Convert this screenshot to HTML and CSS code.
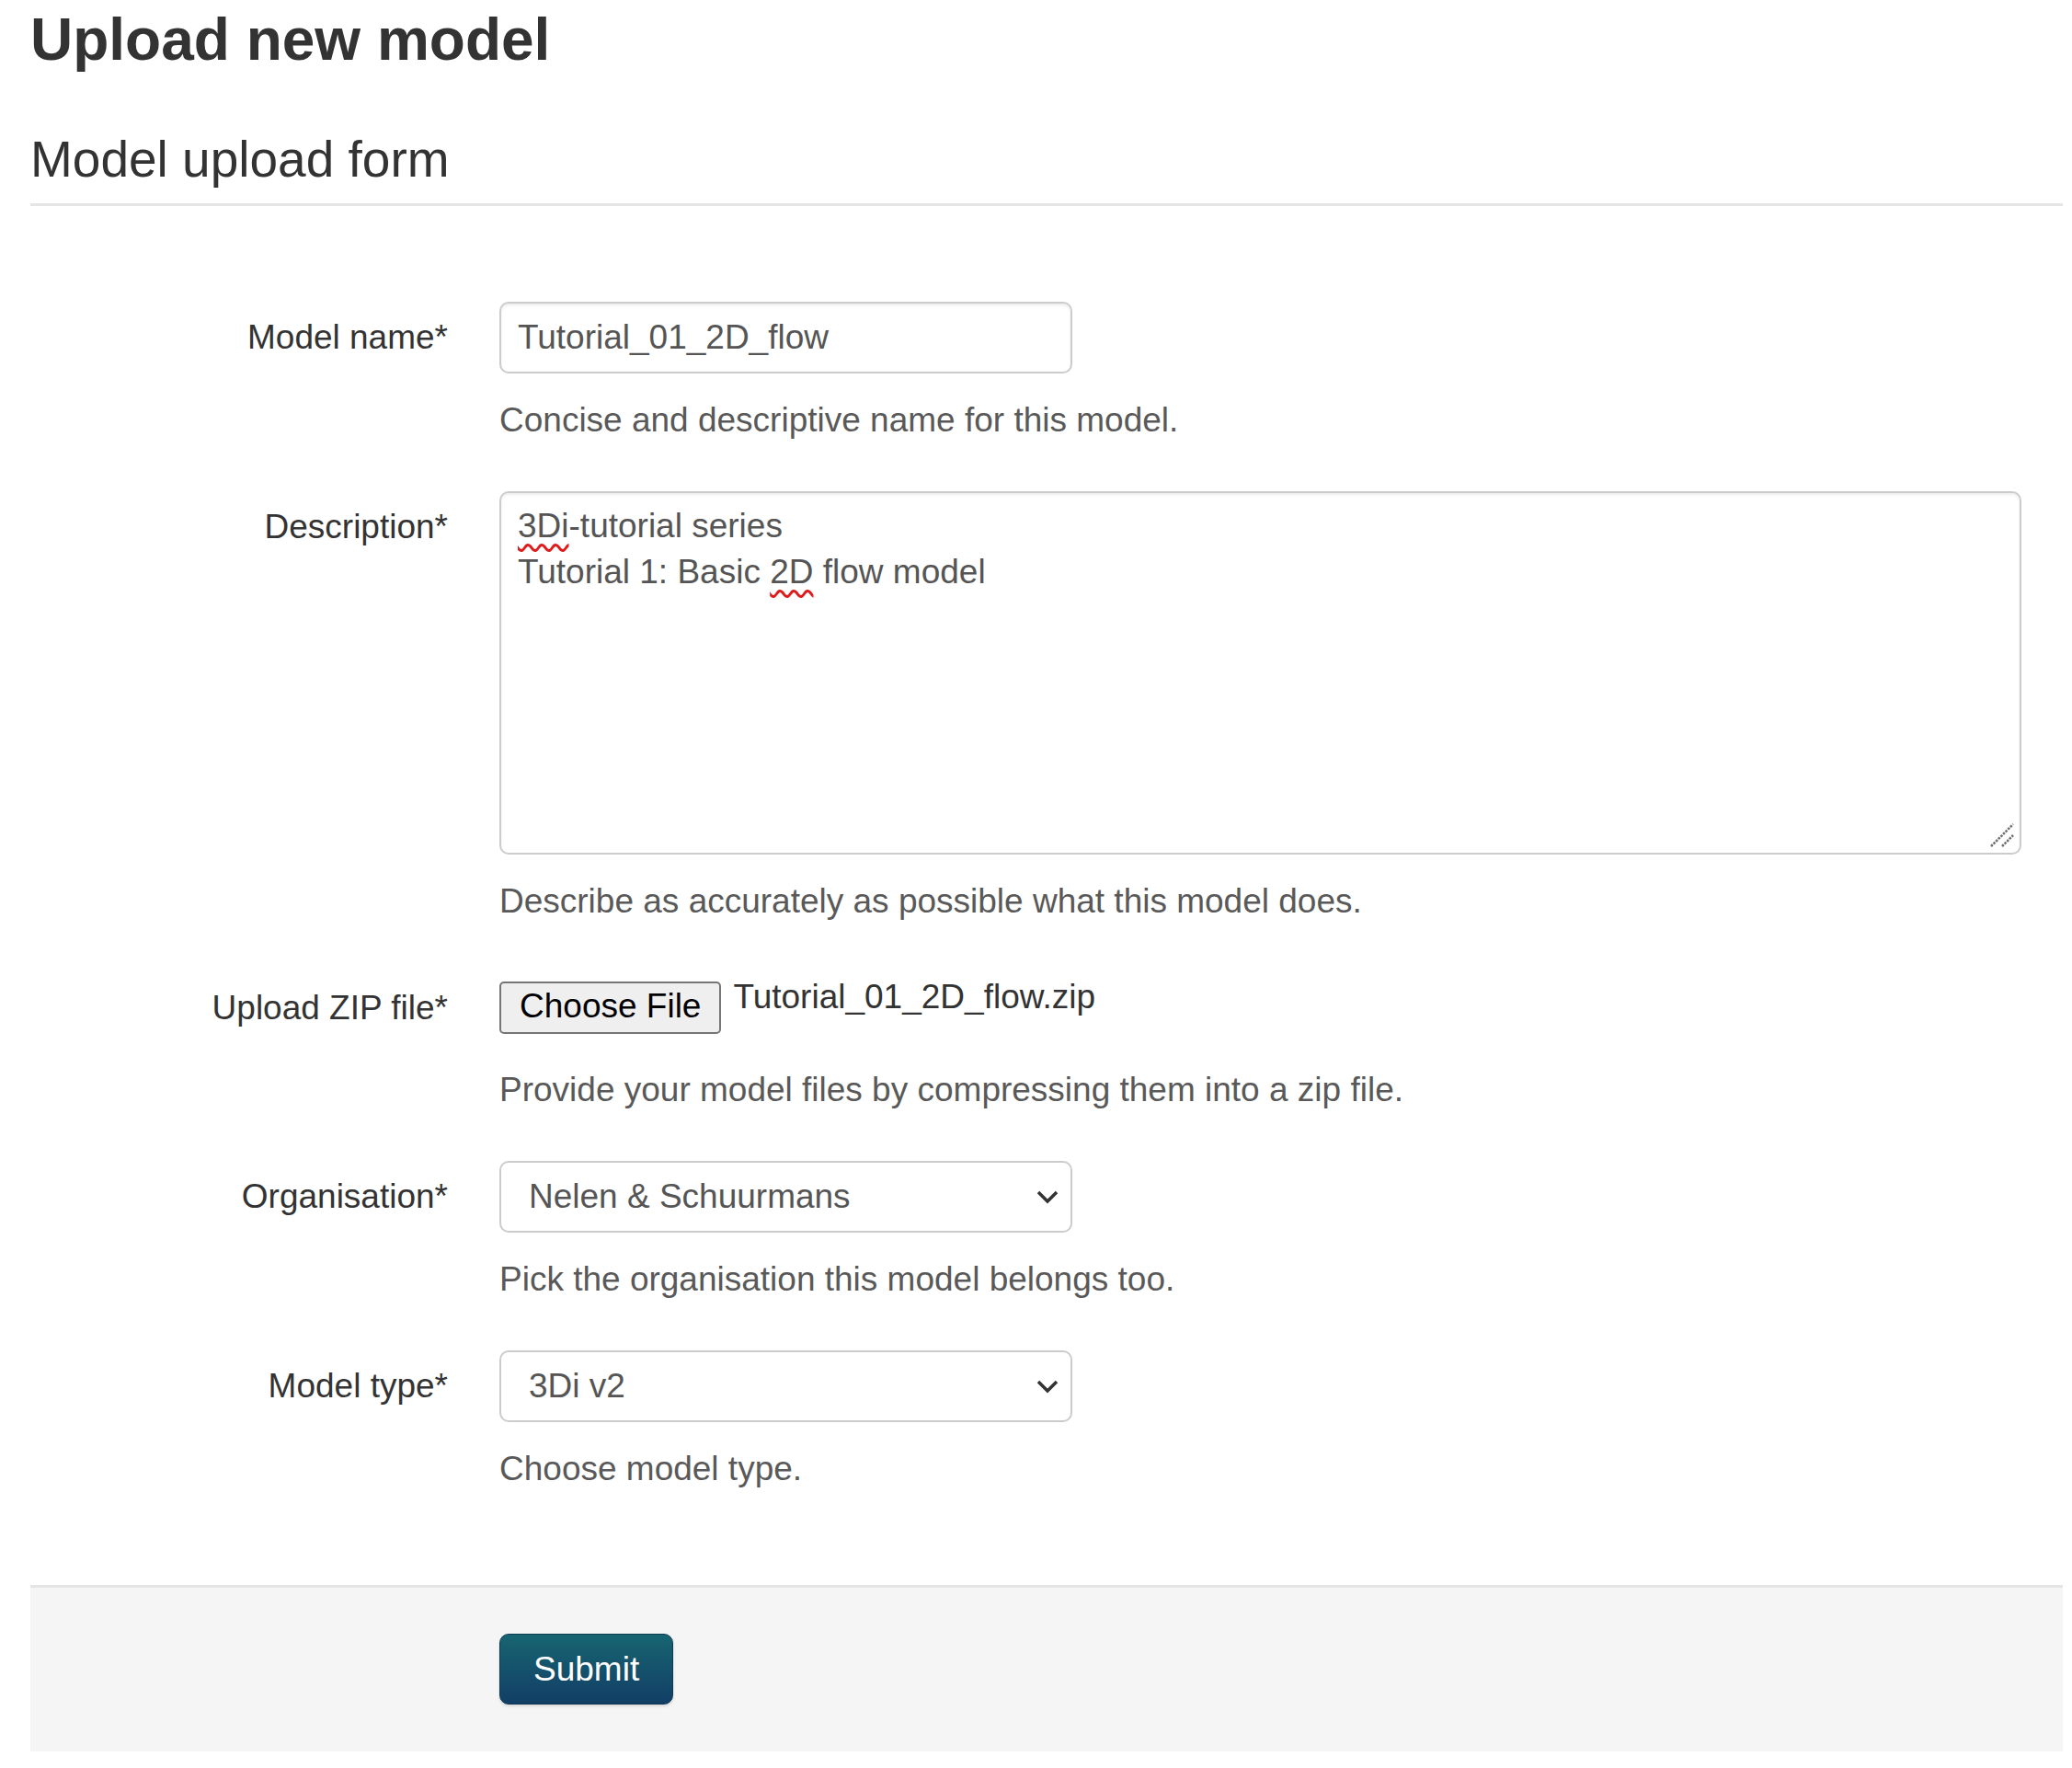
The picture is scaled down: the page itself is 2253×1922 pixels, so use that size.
FILE: index.html
```html
<!DOCTYPE html>
<html lang="en">
<head>
<meta charset="utf-8">
<title>Upload new model</title>
<link rel="stylesheet" href="styles.css">
</head>
<body>
<div class="page">
  <h1 class="title">Upload new model</h1>
  <form class="form">
    <div class="legend">Model upload form</div>

    <div class="group">
      <label class="label" for="name">Model name*</label>
      <div class="controls">
        <input class="input" id="name" type="text" value="Tutorial_01_2D_flow">
        <p class="help">Concise and descriptive name for this model.</p>
      </div>
    </div>

    <div class="group">
      <label class="label">Description*</label>
      <div class="controls">
        <div class="textarea"><span class="misspelled">3Di</span>-tutorial series<br>Tutorial 1: Basic <span class="misspelled">2D</span> flow model<svg class="grip" width="30" height="30" viewBox="0 0 30 30"><path d="M3 27 L27 3" stroke="#6e6e6e" stroke-width="2.5" stroke-dasharray="2.5 1.2"/><path d="M15 27 L27 15" stroke="#6e6e6e" stroke-width="2.5" stroke-dasharray="2.5 1.2"/></svg></div>
        <p class="help">Describe as accurately as possible what this model does.</p>
      </div>
    </div>

    <div class="group">
      <label class="label">Upload ZIP file*</label>
      <div class="controls">
        <div class="file">
          <button type="button" class="file-btn">Choose File</button>
          <span class="file-name">Tutorial_01_2D_flow.zip</span>
        </div>
        <p class="help">Provide your model files by compressing them into a zip file.</p>
      </div>
    </div>

    <div class="group">
      <label class="label">Organisation*</label>
      <div class="controls">
        <div class="select"><span>Nelen &amp; Schuurmans</span><svg class="chev" width="24" height="16" viewBox="0 0 24 16"><path d="M2 3 L12 13 L22 3" fill="none" stroke="#333" stroke-width="3.5"/></svg></div>
        <p class="help">Pick the organisation this model belongs too.</p>
      </div>
    </div>

    <div class="group last">
      <label class="label">Model type*</label>
      <div class="controls">
        <div class="select"><span>3Di v2</span><svg class="chev" width="24" height="16" viewBox="0 0 24 16"><path d="M2 3 L12 13 L22 3" fill="none" stroke="#333" stroke-width="3.5"/></svg></div>
        <p class="help">Choose model type.</p>
      </div>
    </div>

    <div class="actions">
      <button type="submit" class="submit">Submit</button>
    </div>
  </form>
</div>
</body>
</html>
```
FILE: styles.css
```css
html, body {
  margin: 0;
  padding: 0;
  background: #ffffff;
}

body {
  font-family: "Liberation Sans", Arial, sans-serif;
  font-size: 37px;
  color: #333333;
}

.page {
  padding: 0 10px 0 33px;
}

.title {
  margin: 7px 0 0;
  font-size: 64px;
  line-height: 1.15;
  font-weight: 700;
  color: #333333;
}

.form {
  margin: 0;
}

.legend {
  margin-top: 61px;
  font-size: 55px;
  line-height: 63px;
  padding-bottom: 16px;
  border-bottom: 3px solid #e5e5e5;
  margin-bottom: 104px;
  color: #333333;
}

.group {
  display: grid;
  grid-template-columns: 454px 1fr;
  column-gap: 56px;
  margin-bottom: 51px;
}

.group.last {
  margin-bottom: 0;
}

.label {
  padding-top: 13px;
  line-height: 52px;
  text-align: right;
  color: #333333;
}

.controls {
  min-width: 0;
}

.input {
  display: block;
  box-sizing: border-box;
  width: 623px;
  height: 78px;
  margin: 0;
  padding: 0 18px;
  border: 2px solid #cccccc;
  border-radius: 10px;
  box-shadow: inset 0 2px 3px rgba(0, 0, 0, 0.075);
  font-family: inherit;
  font-size: 37px;
  color: #555555;
  background: #ffffff;
  outline: none;
}

.textarea {
  position: relative;
  box-sizing: border-box;
  width: 1655px;
  height: 395px;
  padding: 11px 18px;
  border: 2px solid #cccccc;
  border-radius: 10px;
  box-shadow: inset 0 2px 3px rgba(0, 0, 0, 0.075);
  line-height: 50px;
  color: #555555;
}

.misspelled {
  text-decoration: underline wavy #e01b1b;
  text-decoration-thickness: 2.5px;
  text-underline-offset: 7px;
}

.grip {
  position: absolute;
  right: 4px;
  bottom: 4px;
}

.help {
  margin: 25px 0 0;
  line-height: 52px;
  color: #595959;
}

.file {
  display: flex;
  align-items: flex-start;
  height: 77px;
}

.file-btn {
  margin: 10px 0 0;
  padding: 0 20px 4px;
  height: 57px;
  box-sizing: border-box;
  border: 2px solid #767676;
  border-radius: 5px;
  background: #efefef;
  font-family: inherit;
  font-size: 37px;
  line-height: 49px;
  color: #000000;
}

.file-name {
  margin: 1px 0 0 13px;
  line-height: 52px;
  color: #333333;
}

.select {
  display: flex;
  align-items: center;
  justify-content: space-between;
  box-sizing: border-box;
  width: 623px;
  height: 78px;
  padding: 0 13px 0 30px;
  border: 2px solid #cccccc;
  border-radius: 10px;
  background: #ffffff;
  line-height: 52px;
  color: #555555;
}

.chev {
  display: block;
}

.actions {
  margin-top: 100px;
  padding: 50px 20px 51px 510px;
  border-top: 3px solid #e5e5e5;
  background: #f5f5f5;
}

.submit {
  display: block;
  height: 77px;
  box-sizing: border-box;
  padding: 0 36px;
  border: 1px solid #0f3a52;
  border-radius: 10px;
  background: linear-gradient(to bottom, #176571, #123e66);
  box-shadow: 0 2px 3px rgba(0, 0, 0, 0.12);
  font-family: inherit;
  font-size: 37px;
  line-height: 75px;
  color: #ffffff;
}
```
